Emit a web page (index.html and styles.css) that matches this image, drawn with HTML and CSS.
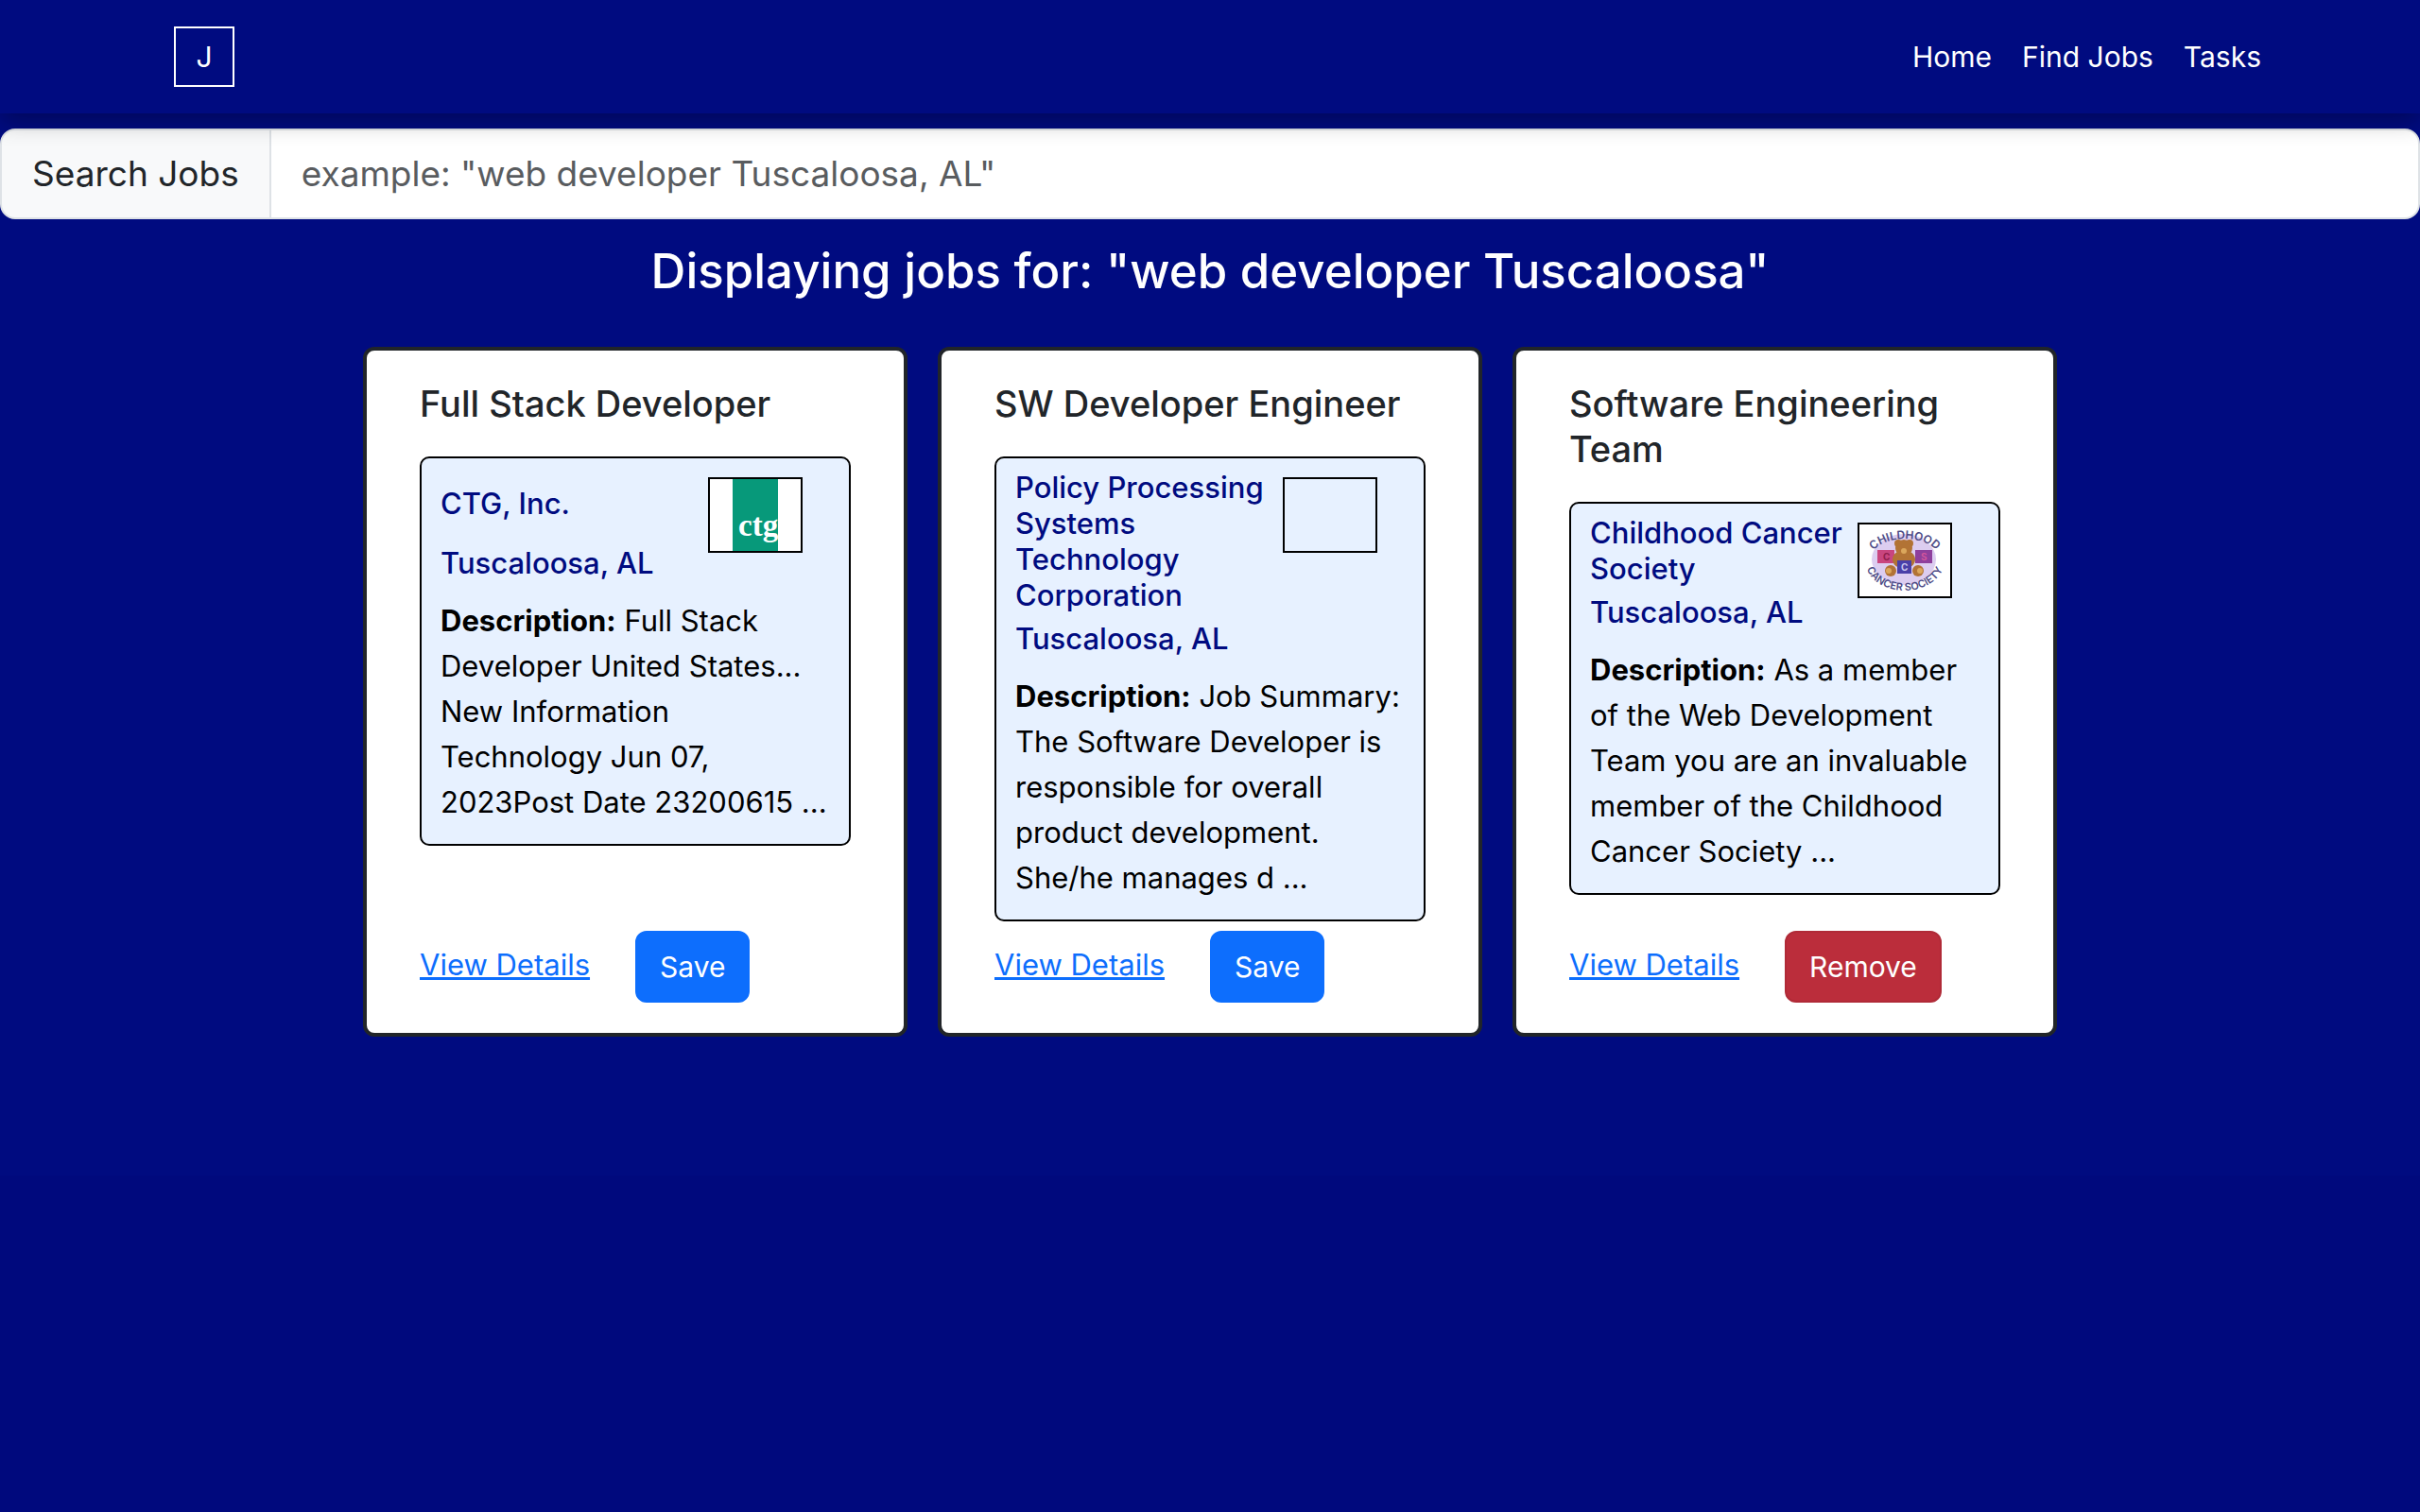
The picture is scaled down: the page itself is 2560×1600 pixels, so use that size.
FILE: index.html
```html
<!DOCTYPE html>
<html lang="en">
<head>
  <meta charset="utf-8">
  <meta name="viewport" content="width=device-width, initial-scale=1">
  <title>Find Jobs</title>
  <link rel="stylesheet" href="styles.css">
</head>
<body>
  <header class="navbar">
    <a class="brand" href="#">J</a>
    <nav class="nav">
      <a class="nav-link" href="#">Home</a>
      <a class="nav-link" href="#">Find Jobs</a>
      <a class="nav-link" href="#">Tasks</a>
    </nav>
  </header>

  <main class="page">
    <form class="search">
      <label class="search-label" for="job-search">Search Jobs</label>
      <input class="search-input" id="job-search" type="text" placeholder='example: "web developer Tuscaloosa, AL"'>
    </form>

    <h3 class="results-title">Displaying jobs for: "web developer Tuscaloosa"</h3>

    <section class="jobs">
      <article class="card">
        <h5 class="card-title">Full Stack Developer</h5>
        <div class="summary">
          <div class="employer">
            <div class="employer-text">
              <h6 class="employer-line">CTG, Inc.</h6>
              <h6 class="employer-line">Tuscaloosa, AL</h6>
            </div>
            <svg class="logo logo-filled" viewBox="0 0 96 76" role="img" aria-label="CTG">
              <rect x="24" y="0" width="48" height="76" fill="#07997a"/>
              <text class="ctg-text" x="30" y="60">ctg</text>
            </svg>
          </div>
          <p class="description"><b>Description:</b> Full Stack Developer United States... New Information Technology Jun 07, 2023Post Date 23200615 ...</p>
        </div>
        <div class="actions">
          <a class="details" href="#">View Details</a>
          <button class="btn btn-save" type="button">Save</button>
        </div>
      </article>

      <article class="card">
        <h5 class="card-title">SW Developer Engineer</h5>
        <div class="summary">
          <div class="employer">
            <div class="employer-text">
              <h6 class="employer-line">Policy Processing Systems Technology Corporation</h6>
              <h6 class="employer-line">Tuscaloosa, AL</h6>
            </div>
            <div class="logo"></div>
          </div>
          <p class="description"><b>Description:</b> Job Summary: The Software Developer is responsible for overall product development. She/he manages d ...</p>
        </div>
        <div class="actions">
          <a class="details" href="#">View Details</a>
          <button class="btn btn-save" type="button">Save</button>
        </div>
      </article>

      <article class="card">
        <h5 class="card-title">Software Engineering Team</h5>
        <div class="summary">
          <div class="employer">
            <div class="employer-text">
              <h6 class="employer-line">Childhood Cancer Society</h6>
              <h6 class="employer-line">Tuscaloosa, AL</h6>
            </div>
            <svg class="logo logo-filled" viewBox="0 0 96 76" role="img" aria-label="Childhood Cancer Society">
              <defs>
                <path id="arc-top" d="M13 30 A37 22 0 0 1 83 30"/>
                <path id="arc-bottom" d="M6 38 A42 32 0 0 0 90 38"/>
              </defs>
              <ellipse cx="47" cy="37" rx="34" ry="27" fill="#dccdf0"/>
              <rect x="19" y="27" width="18" height="14" fill="#c9457f"/>
              <rect x="59" y="27" width="18" height="14" fill="#8e3f9c"/>
              <g fill="#b27335">
                <circle cx="41" cy="20" r="4"/>
                <circle cx="53" cy="20" r="4"/>
                <circle cx="47" cy="25" r="9"/>
                <ellipse cx="47" cy="37" rx="12" ry="10"/>
                <circle cx="33" cy="49" r="6"/>
                <circle cx="62" cy="49" r="6"/>
              </g>
              <g fill="#dba75c">
                <circle cx="31" cy="49" r="3"/>
                <circle cx="64" cy="49" r="3"/>
                <circle cx="47" cy="28" r="3"/>
              </g>
              <rect x="40" y="38" width="15" height="14" fill="#4a40a8"/>
              <text class="block-letter" x="25" y="38" fill="#8f1d4c">C</text>
              <text class="block-letter" x="65" y="38" fill="#d3559b">S</text>
              <text class="block-letter" x="44" y="49" fill="#c9c5ee">C</text>
              <text class="ring-text ring-top"><textPath href="#arc-top" startOffset="50%">CHILDHOOD</textPath></text>
              <text class="ring-text"><textPath href="#arc-bottom" startOffset="50%">CANCER SOCIETY</textPath></text>
            </svg>
          </div>
          <p class="description"><b>Description:</b> As a member of the Web Development Team you are an invaluable member of the Childhood Cancer Society ...</p>
        </div>
        <div class="actions">
          <a class="details" href="#">View Details</a>
          <button class="btn btn-remove" type="button">Remove</button>
        </div>
      </article>
    </section>
  </main>
</body>
</html>
```

FILE: styles.css
```css
* {
  box-sizing: border-box;
}

body {
  margin: 0;
  background: #00097d;
  color: #212529;
  font-family: Inter, "Liberation Sans", sans-serif;
  font-size: 31px;
  line-height: 48px;
}

h3,
h5,
h6,
p {
  margin: 0;
  font-weight: 500;
}

/* Top bar */
.navbar {
  position: relative;
  display: flex;
  align-items: center;
  justify-content: space-between;
  height: 120px;
  padding: 0 168px 0 184px;
  background: #000b80;
  box-shadow: 0 8px 24px rgba(0, 0, 0, 0.3);
}

.brand {
  display: flex;
  align-items: center;
  justify-content: center;
  width: 64px;
  height: 64px;
  border: 2px solid #fff;
  color: #fff;
  font-size: 30px;
  text-decoration: none;
}

.nav {
  display: flex;
  gap: 32px;
}

.nav-link {
  color: #fff;
  font-size: 30px;
  text-decoration: none;
}

/* Page body */
.page {
  padding: 16px 0 100px;
  background: #000b80;
}

.search {
  display: flex;
  font-size: 37px;
  line-height: 60px;
}

.search-label {
  padding: 16px 32px;
  border: 2px solid #dee2e6;
  border-radius: 16px 0 0 16px;
  background: #f8f9fa;
}

.search-input {
  flex: 1;
  min-width: 0;
  margin-left: -2px;
  padding: 16px 32px;
  border: 2px solid #dee2e6;
  border-radius: 0 16px 16px 0;
  background: #fff;
  color: #212529;
  font: inherit;
}

.search-input::placeholder {
  color: #595c5f;
  opacity: 1;
}

/* Results */
.results-title {
  margin-top: 22px;
  color: #fff;
  font-size: 51px;
  line-height: 66px;
  text-align: center;
}

.jobs {
  display: grid;
  grid-template-columns: repeat(3, 1fr);
  gap: 32px;
  width: 70%;
  margin: 47px auto;
}

.card {
  display: flex;
  flex-direction: column;
  padding: 32px 56px;
  border: 4px solid #212529;
  border-radius: 12px;
  background: #fff;
}

.card-title {
  margin-bottom: 32px;
  font-size: 38px;
  line-height: 48px;
}

.summary {
  padding: 12px 20px 20px;
  border: 2px solid #000;
  border-radius: 10px;
  background: #e7f1ff;
  color: #000;
}

.employer {
  display: grid;
  grid-template-columns: 2fr 1fr;
}

.employer-text {
  display: flex;
  flex-direction: column;
  gap: 8px;
  min-height: 118px;
}

.employer-line {
  margin-top: auto;
  color: #000b80;
  font-size: 31px;
  line-height: 38px;
}

.logo {
  width: 100px;
  height: 80px;
  margin: 8px 0 0 8px;
  border: 2px solid #000;
}

.logo-filled {
  background: #fff;
}

.ctg-text {
  fill: #fff;
  font-family: "Liberation Serif", serif;
  font-size: 33px;
  font-weight: 700;
}

.block-letter {
  font-size: 10px;
  font-weight: 700;
}

.ring-text {
  fill: #4c4a85;
  font-size: 11px;
  font-weight: 600;
  text-anchor: middle;
}

.ring-top {
  font-size: 12px;
}

.description {
  margin-top: 18px;
  font-weight: 400;
}

.actions {
  display: flex;
  align-items: flex-start;
  gap: 48px;
  margin-top: auto;
  padding-top: 10px;
}

.details {
  padding-top: 12px;
  color: #0d6efd;
}

.btn {
  padding: 12px 24px;
  border: 2px solid transparent;
  border-radius: 12px;
  color: #fff;
  font-family: inherit;
  font-size: 30px;
  line-height: 48px;
}

.btn-save {
  border-color: #0d6efd;
  background: #0d6efd;
}

.btn-remove {
  border-color: #b02a37;
  background: #bb2d3b;
}
```
